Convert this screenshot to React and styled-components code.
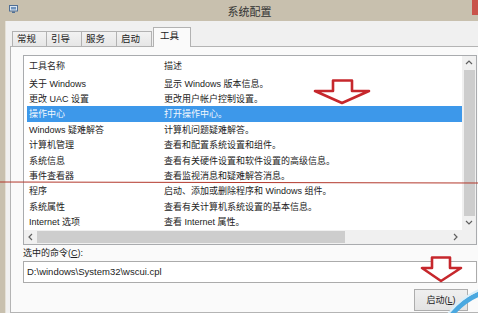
import React from 'react'
import styled, { createGlobalStyle } from 'styled-components'

const GlobalStyle = createGlobalStyle`
  html, body {
    margin: 0;
    padding: 0;
  }
  body {
    width: 478px;
    height: 313px;
    overflow: hidden;
    background: #f0f0f0;
    font-family: "Liberation Sans", "Noto Sans CJK SC", sans-serif;
    color: #222;
  }
`

const tools = [
  ['关于 Windows', '显示 Windows 版本信息。'],
  ['更改 UAC 设置', '更改用户帐户控制设置。'],
  ['操作中心', '打开操作中心。'],
  ['Windows 疑难解答', '计算机问题疑难解答。'],
  ['计算机管理', '查看和配置系统设置和组件。'],
  ['系统信息', '查看有关硬件设置和软件设置的高级信息。'],
  ['事件查看器', '查看监视消息和疑难解答消息。'],
  ['程序', '启动、添加或删除程序和 Windows 组件。'],
  ['系统属性', '查看有关计算机系统设置的基本信息。'],
  ['Internet 选项', '查看 Internet 属性。'],
]

const tabs = ['常规', '引导', '服务', '启动', '工具']

function Chevron({ dir }) {
  const pts = {
    up: '1,5 4,2 7,5',
    down: '1,2 4,5 7,2',
    left: '5,1 2,4 5,7',
    right: '2,1 5,4 2,7',
  }[dir]
  return (
    <svg width="8" height="8" viewBox="0 0 8 8">
      <polyline points={pts} fill="none" stroke="#606060" strokeWidth="1.2" />
    </svg>
  )
}

export default function App() {
  return (
    <Window>
      <GlobalStyle />
      <TitleBar>
        <AppIcon width="9" height="8" viewBox="0 0 9 8">
          <rect x="0.5" y="0.5" width="8" height="5.5" fill="#dce6f0" stroke="#4f6f95" />
          <rect x="2" y="2" width="5" height="2.5" fill="#6f93bd" />
          <rect x="3" y="6.5" width="3" height="1.5" fill="#4f6f95" />
        </AppIcon>
        <Title>系统配置</Title>
        <CloseBtn />
      </TitleBar>
      <Body>
        <TabStrip>
          {tabs.map((t) => (
            <Tab key={t} $active={t === '工具'}>{t}</Tab>
          ))}
        </TabStrip>
        <Panel>
          <ListBox>
            <ListArea>
              <HeaderRow>
                <Cell>工具名称</Cell>
                <Cell>描述</Cell>
              </HeaderRow>
              {tools.map(([name, desc], i) => (
                <Row key={name} $selected={i === 2}>
                  <Cell>{name}</Cell>
                  <Cell>{desc}</Cell>
                </Row>
              ))}
            </ListArea>
            <VScroll>
              <ArrowBox><Chevron dir="up" /></ArrowBox>
              <VThumb />
              <ArrowBox><Chevron dir="down" /></ArrowBox>
            </VScroll>
            <HScroll>
              <ArrowBox $w={13}><Chevron dir="left" /></ArrowBox>
              <HThumb />
              <Track />
              <ArrowBox $w={12}><Chevron dir="right" /></ArrowBox>
            </HScroll>
            <Corner />
          </ListBox>
          <Label>选中的命令(<u>C</u>):</Label>
          <CommandBox>D:\windows\System32\wscui.cpl</CommandBox>
          <Button>启动(<u>L</u>)</Button>
        </Panel>
      </Body>
      <Marks width="478" height="313" viewBox="0 0 478 313">
        <line x1="0" y1="182" x2="478" y2="183" stroke="#b3392d" strokeWidth="1.2" />
        <polygon
          points="333,80.5 352,80.5 352,91 369,91 342,103 315,91 333,91"
          fill="#fff"
          stroke="#c6272c"
          strokeWidth="2.6"
          strokeLinejoin="round"
        />
        <polygon
          points="432,257.5 450,257.5 450,268 461,268 441,281 422,268 432,268"
          fill="#fff"
          stroke="#c6272c"
          strokeWidth="2.6"
          strokeLinejoin="round"
        />
        <path d="M452 314 Q464 300 479 294" fill="none" stroke="#4aa8e0" strokeWidth="5" />
        <path d="M448 314 Q461 298 479 290" fill="none" stroke="#d9eef9" strokeWidth="2" />
      </Marks>
    </Window>
  )
}

const Window = styled.div`
  position: relative;
  width: 478px;
  height: 313px;
  overflow: hidden;
  display: flex;
  flex-direction: column;
  background: #c8c0ae;
`

const TitleBar = styled.div`
  height: 21px;
  flex: none;
  display: flex;
  align-items: center;
`

const AppIcon = styled.svg`
  margin-left: 9px;
  margin-top: -3px;
  flex: none;
`

const Title = styled.div`
  flex: 1;
  text-align: center;
  padding-left: 9px;
  font-size: 11px;
  color: #333;
`

const CloseBtn = styled.div`
  align-self: flex-start;
  width: 6px;
  height: 15px;
  background: #c9534a;
`

const Body = styled.div`
  flex: 1;
  margin-left: 5px;
  border-left: 1px solid #e4e0d6;
  background: #f0f0f0;
  padding: 6px 0 0 4px;
  display: flex;
  flex-direction: column;
  min-height: 0;
`

const TabStrip = styled.div`
  height: 20px;
  display: flex;
  align-items: flex-end;
  padding-left: 2px;
  margin-bottom: -1px;
  position: relative;
  z-index: 1;
`

const Tab = styled.div`
  box-sizing: border-box;
  width: ${(p) => (p.$active ? '38px' : '35px')};
  height: ${(p) => (p.$active ? '20px' : '16px')};
  margin-left: ${(p) => (p.$active ? '1px' : '0')};
  border: 1px solid #b2b2b2;
  border-bottom: ${(p) => (p.$active ? 'none' : '1px solid #b2b2b2')};
  border-left: ${(p) => (p.$active ? '1px solid #b2b2b2' : 'none')};
  &:first-child {
    border-left: 1px solid #b2b2b2;
  }
  background: ${(p) => (p.$active ? '#fafafa' : 'linear-gradient(#f2f2f2, #e6e6e6)')};
  font-size: 9.5px;
  line-height: ${(p) => (p.$active ? '16px' : '14px')};
  padding-left: ${(p) => (p.$active ? '6px' : '4px')};
  color: #222;
`

const Panel = styled.div`
  flex: 1;
  border: 1px solid #b4b4b4;
  border-right: none;
  background: #fafafa;
  padding: 8px 0 0 12px;
  display: flex;
  flex-direction: column;
  min-height: 0;
`

const ListBox = styled.div`
  box-sizing: border-box;
  width: 454px;
  height: 190px;
  flex: none;
  border: 1px solid #a9abae;
  background: #fff;
  display: grid;
  grid-template-columns: 1fr 14px;
  grid-template-rows: 174px 14px;
`

const ListArea = styled.div`
  overflow: hidden;
  font-size: 9px;
`

const HeaderRow = styled.div`
  display: grid;
  grid-template-columns: 135px 1fr;
  height: 19.5px;
  align-items: center;
  margin-left: 3px;
  color: #2b2b2b;
`

const Row = styled.div`
  display: grid;
  grid-template-columns: 135px 1fr;
  height: 15.4px;
  align-items: center;
  margin-left: 3px;
  white-space: nowrap;
  background: ${(p) => (p.$selected ? '#3d98ea' : 'transparent')};
  color: ${(p) => (p.$selected ? '#f2f7fd' : '#222')};
`

const Cell = styled.div`
  padding-left: 2px;
  overflow: hidden;
`

const VScroll = styled.div`
  background: #f0f0f0;
  display: flex;
  flex-direction: column;
`

const ArrowBox = styled.div`
  flex: none;
  width: ${(p) => (p.$w ? `${p.$w}px` : '14px')};
  height: 14px;
  display: flex;
  align-items: center;
  justify-content: center;
`

const VThumb = styled.div`
  flex: 1;
  margin: 0 1px 0 2px;
  background: #cdcdcd;
`

const HScroll = styled.div`
  background: #f0f0f0;
  display: flex;
`

const HThumb = styled.div`
  width: 308px;
  margin: 1px 0;
  background: #cdcdcd;
`

const Track = styled.div`
  flex: 1;
`

const Corner = styled.div`
  background: #f0f0f0;
`

const Label = styled.div`
  margin-top: 3px;
  font-size: 9px;
  line-height: 11px;
  color: #222;
`

const CommandBox = styled.div`
  box-sizing: border-box;
  width: 454px;
  height: 22px;
  margin-top: 1.5px;
  border: 1px solid #ababab;
  background: #fff;
  font-size: 9.5px;
  line-height: 20px;
  padding-left: 3px;
  color: #222;
`

const Button = styled.div`
  box-sizing: border-box;
  align-self: flex-end;
  margin: 6px 10px 0 0;
  width: 54px;
  height: 22px;
  border: 1px solid #adadad;
  background: linear-gradient(#efefef, #e3e3e3);
  font-size: 9px;
  display: flex;
  align-items: center;
  justify-content: center;
  color: #222;
`

const Marks = styled.svg`
  position: absolute;
  left: 0;
  top: 0;
  pointer-events: none;
`
